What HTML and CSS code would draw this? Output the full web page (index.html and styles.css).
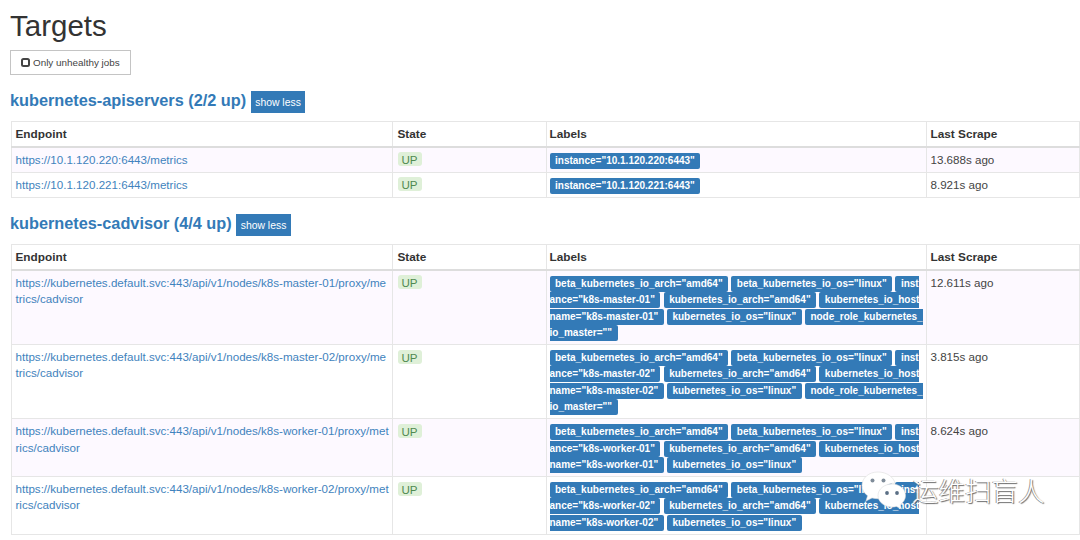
FILE: index.html
```html
<!DOCTYPE html>
<html lang="en">
<head>
    <meta charset="UTF-8">
    <title>Targets</title>
    <link rel="stylesheet" href="styles.css">
</head>
<body>
<div class="page">
    <h1>Targets</h1>
    <div class="filter">
        <button class="filter-btn"><i class="box-icon"></i>Only unhealthy jobs</button>
    </div>

    <h2 class="job"><a href="#">kubernetes-apiservers (2/2 up)</a> <button class="toggle">show less</button></h2>
    <table class="targets">
        <colgroup><col class="c-end"><col class="c-state"><col class="c-labels"><col class="c-last"></colgroup>
        <thead>
        <tr><th>Endpoint</th><th>State</th><th>Labels</th><th>Last Scrape</th></tr>
        </thead>
        <tbody>
        <tr>
            <td><a href="#">https://10.1.120.220:6443/metrics</a></td>
            <td><span class="up">UP</span></td>
            <td><span class="label">instance="10.1.120.220:6443"</span></td>
            <td>13.688s ago</td>
        </tr>
        <tr>
            <td><a href="#">https://10.1.120.221:6443/metrics</a></td>
            <td><span class="up">UP</span></td>
            <td><span class="label">instance="10.1.120.221:6443"</span></td>
            <td>8.921s ago</td>
        </tr>
        </tbody>
    </table>

    <h2 class="job"><a href="#">kubernetes-cadvisor (4/4 up)</a> <button class="toggle">show less</button></h2>
    <table class="targets">
        <colgroup><col class="c-end"><col class="c-state"><col class="c-labels"><col class="c-last"></colgroup>
        <thead>
        <tr><th>Endpoint</th><th>State</th><th>Labels</th><th>Last Scrape</th></tr>
        </thead>
        <tbody>
        <tr>
            <td><a href="#">https://kubernetes.default.svc:443/api/v1/nodes/k8s-master-01/proxy/metrics/cadvisor</a></td>
            <td><span class="up">UP</span></td>
            <td>
                <span class="label">beta_kubernetes_io_arch="amd64"</span>
                <span class="label">beta_kubernetes_io_os="linux"</span>
                <span class="label">instance="k8s-master-01"</span>
                <span class="label">kubernetes_io_arch="amd64"</span>
                <span class="label">kubernetes_io_hostname="k8s-master-01"</span>
                <span class="label">kubernetes_io_os="linux"</span>
                <span class="label">node_role_kubernetes_io_master=""</span>
            </td>
            <td>12.611s ago</td>
        </tr>
        <tr>
            <td><a href="#">https://kubernetes.default.svc:443/api/v1/nodes/k8s-master-02/proxy/metrics/cadvisor</a></td>
            <td><span class="up">UP</span></td>
            <td>
                <span class="label">beta_kubernetes_io_arch="amd64"</span>
                <span class="label">beta_kubernetes_io_os="linux"</span>
                <span class="label">instance="k8s-master-02"</span>
                <span class="label">kubernetes_io_arch="amd64"</span>
                <span class="label">kubernetes_io_hostname="k8s-master-02"</span>
                <span class="label">kubernetes_io_os="linux"</span>
                <span class="label">node_role_kubernetes_io_master=""</span>
            </td>
            <td>3.815s ago</td>
        </tr>
        <tr>
            <td><a href="#">https://kubernetes.default.svc:443/api/v1/nodes/k8s-worker-01/proxy/metrics/cadvisor</a></td>
            <td><span class="up">UP</span></td>
            <td>
                <span class="label">beta_kubernetes_io_arch="amd64"</span>
                <span class="label">beta_kubernetes_io_os="linux"</span>
                <span class="label">instance="k8s-worker-01"</span>
                <span class="label">kubernetes_io_arch="amd64"</span>
                <span class="label">kubernetes_io_hostname="k8s-worker-01"</span>
                <span class="label">kubernetes_io_os="linux"</span>
            </td>
            <td>8.624s ago</td>
        </tr>
        <tr>
            <td><a href="#">https://kubernetes.default.svc:443/api/v1/nodes/k8s-worker-02/proxy/metrics/cadvisor</a></td>
            <td><span class="up">UP</span></td>
            <td>
                <span class="label">beta_kubernetes_io_arch="amd64"</span>
                <span class="label">beta_kubernetes_io_os="linux"</span>
                <span class="label">instance="k8s-worker-02"</span>
                <span class="label">kubernetes_io_arch="amd64"</span>
                <span class="label">kubernetes_io_hostname="k8s-worker-02"</span>
                <span class="label">kubernetes_io_os="linux"</span>
            </td>
            <td></td>
        </tr>
        </tbody>
    </table>
</div>

<div class="watermark">
    <svg class="wm-icon" width="46" height="40" viewBox="0 0 46 40">
        <path d="M18 2C8.600 2 2 8 2 15.500c0 4.300 2.300 7.800 5.600 10.300L6 31l6-3.100c1.900.5 3.900.8 6 .8 1 0 2-.1 2.900-.2C19.700 18 28 12.500 35 13.300 33.500 6.800 26.500 2 18 2z" fill="#fff" stroke="#ddd" stroke-width=".6"/>
        <circle cx="12.500" cy="10.500" r="2" fill="#7f8c99"/>
        <circle cx="23.500" cy="10.500" r="2" fill="#7f8c99"/>
        <path d="M32 14c-7.700 0-14 5.200-14 11.500S24.300 37 32 37c1.500 0 3-.2 4.400-.6L41.500 39l-1.300-4.400c3.300-2.200 5.300-5.500 5.300-9.100C45.500 19.200 39.700 14 32 14z" fill="#fff" stroke="#ddd" stroke-width=".6"/>
        <circle cx="27" cy="23" r="1.900" fill="#5b6f85"/>
        <circle cx="37" cy="23" r="1.900" fill="#5b6f85"/>
    </svg>
    <span class="wm-text">运维扫盲人</span>
</div>
</body>
</html>
```

FILE: styles.css
```css
*{
    box-sizing: border-box;
}
body{
    margin: 0;
    background: #fff;
    color: #444;
    font-family: "Liberation Sans", Arial, sans-serif;
    font-size: 11.6px;
    line-height: 16.4px;
    height: 540px;
    overflow: hidden;
    position: relative;
}
a{
    color: #3f83bd;
    text-decoration: none;
}
.page{
    padding: 0 2px 0 11px;
}
h1{
    margin: 0 0 0 -1px;
    padding-top: 10px;
    font-size: 29.5px;
    line-height: 32px;
    font-weight: 400;
    color: #333;
}
.filter{
    margin: 8px 0 0 -1px;
}
.filter-btn{
    display: flex;
    align-items: center;
    width: 121px;
    height: 25px;
    padding: 0 0 0 10px;
    border: 1px solid #c4c4c4;
    background: #fff;
    color: #444;
    font-family: inherit;
    font-size: 9.9px;
}
.box-icon{
    width: 9px;
    height: 9px;
    margin-right: 3px;
    border: 2px solid #444;
    border-radius: 2.500px;
}
.job{
    margin: 15px 0 8px -1px;
    height: 23px;
    font-size: 16.3px;
    line-height: 20px;
    font-weight: 700;
}
.job a{
    color: #337ab7;
}
.toggle{
    height: 22px;
    margin-top: 1px;
    padding: 0 4.500px;
    border: 0;
    background: #337ab7;
    color: #fff;
    font-family: inherit;
    font-size: 10.4px;
    vertical-align: top;
}
.targets{
    width: 1068px;
    table-layout: fixed;
    border-collapse: collapse;
    border: 1px solid #ddd;
    margin-bottom: 15px;
}
.c-end{ width: 381px; }
.c-state{ width: 154px; }
.c-labels{ width: 380px; }
.c-last{ width: 153px; }
.targets th,
.targets td{
    padding: 3.800px 3.500px;
    border: 1px solid #e6e6e6;
    text-align: left;
    vertical-align: top;
    word-break: break-all;
}
.targets th:nth-child(1),
.targets td:nth-child(1){
    padding-right: 3px;
}
.targets th:nth-child(2),
.targets td:nth-child(2){
    padding-left: 4.500px;
}
.targets th:nth-child(3),
.targets td:nth-child(3){
    padding-left: 2.500px;
    padding-right: 2.500px;
}
.targets th{
    border-bottom: 2px solid #ddd;
    font-size: 11.800px;
    font-weight: 700;
    color: #333;
}
.targets tbody tr:nth-child(odd){
    background: #fdf9ff;
}
.up{
    padding: .500px 4px;
    border-radius: 3px;
    background: #dff0d8;
    color: #4f8a50;
}
.label{
    padding: 2px 5.500px 3px;
    border-radius: 2px;
    background: #337ab7;
    color: #fff;
    font-size: 10px;
    line-height: 1;
    font-weight: 700;
}
.watermark{
    position: absolute;
    left: 860px;
    top: 470px;
    display: flex;
    align-items: center;
    gap: 6px;
}
.wm-text{
    font-family: "Noto Sans CJK SC", sans-serif;
    font-size: 26.500px;
    line-height: 36px;
    font-weight: 300;
    color: #fff;
    text-shadow: 1px 1px 1px #666, -1px 0 0 #999;
}
```
